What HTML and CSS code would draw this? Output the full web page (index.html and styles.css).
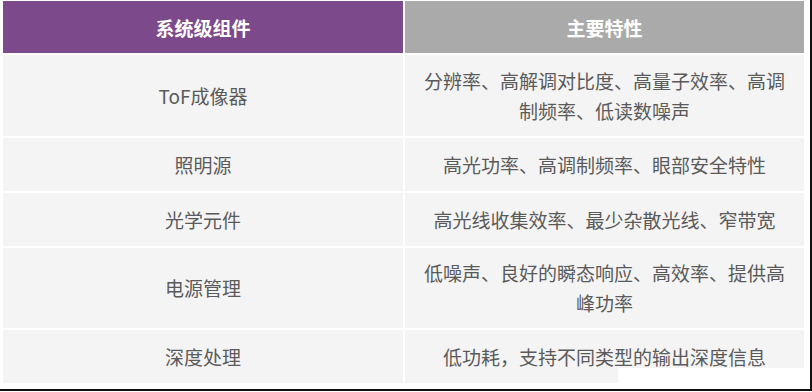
FILE: index.html
```html
<!DOCTYPE html>
<html lang="zh-CN">
<head>
<meta charset="utf-8">
<title>系统级组件</title>
<link rel="stylesheet" href="styles.css">
</head>
<body>
<div class="frame">
  <div class="table">
    <div class="cell head head-a">系统级组件</div>
    <div class="cell head head-b">主要特性</div>

    <div class="cell r-tall">ToF成像器</div>
    <div class="cell r-tall">分辨率、高解调对比度、高量子效率、高调制频率、低读数噪声</div>

    <div class="cell r-short">照明源</div>
    <div class="cell r-short">高光功率、高调制频率、眼部安全特性</div>

    <div class="cell r-short">光学元件</div>
    <div class="cell r-short">高光线收集效率、最少杂散光线、窄带宽</div>

    <div class="cell r-tall2">电源管理</div>
    <div class="cell r-tall2">低噪声、良好的瞬态响应、高效率、提供高峰功率</div>

    <div class="cell r-short">深度处理</div>
    <div class="cell r-short">低功耗，支持不同类型的输出深度信息</div>
  </div>
  <div class="patch"></div>
</div>
</body>
</html>
```

FILE: styles.css
```css
html, body {
  margin: 0;
  padding: 0;
  background: #ffffff;
}

.frame {
  position: relative;
  width: 810px;
  height: 389px;
  border-right: 2px solid #111111;
  border-bottom: 2px solid #111111;
  overflow: hidden;
}

.table {
  display: grid;
  grid-template-columns: 400px 399px;
  grid-template-rows: 52px 81px 53px 53px 80px 53px;
  gap: 2px;
  padding: 1px 0 0 3px;
  font-family: "Noto Sans CJK SC", "Noto Sans", sans-serif;
  font-size: 19px;
  color: #5a5a5a;
}

.cell {
  display: flex;
  align-items: center;
  justify-content: center;
  text-align: center;
  background: #f4f4f4;
  line-height: 30px;
  padding: 0 16px;
}

.head {
  color: #ffffff;
  font-weight: 700;
  padding-top: 2px;
}

.head-a {
  background: #7c4a8a;
}

.head-b {
  background: #aaaaaa;
}

.patch {
  position: absolute;
  left: 618px;
  top: 368px;
  width: 200px;
  height: 30px;
  background: #ffffff;
}
```
